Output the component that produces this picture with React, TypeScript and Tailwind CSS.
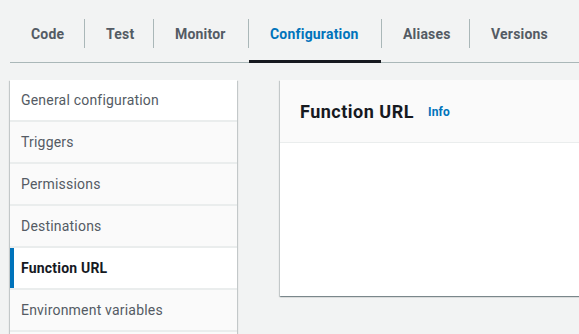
const tabs = [
  { label: "Code", w: "w-[74px]" },
  { label: "Test", w: "w-[69px]" },
  { label: "Monitor", w: "w-[95px]" },
  { label: "Configuration", w: "w-[133px]" },
  { label: "Aliases", w: "w-[88px]" },
  { label: "Versions", w: "w-[98px]" },
]
const sideItems = [
  "General configuration",
  "Triggers",
  "Permissions",
  "Destinations",
  "Function URL",
  "Environment variables",
  "",
]

const cardShadow =
  "shadow-[0_1px_1px_0_rgba(0,28,36,0.3),1px_1px_1px_0_rgba(0,28,36,0.15),-1px_1px_1px_0_rgba(0,28,36,0.15)]"

export default function App() {
  const active = "Configuration"
  const activeSide = "Function URL"

  return (
    <div className="w-[579px] h-[334px] overflow-hidden bg-[#f2f3f3] font-['Roboto',sans-serif] text-[14px]">
      {/* Tabs */}
      <div className="ml-[10px] h-[63px] border-b border-[#aab7b8] flex items-start pt-[19px]">
        {tabs.map((t, i) => (
          <div key={t.label} className={`relative h-[43px] shrink-0 ${t.w}`}>
            <div
              className={`h-[29px] pt-[2px] pl-[21px] flex items-center font-bold tracking-[0.2px] whitespace-nowrap ${
                i > 0 ? "border-l border-[#aab7b8]" : ""
              } ${t.label === active ? "text-[#0073bb]" : "text-[#545b64]"}`}
            >
              {t.label}
            </div>
            {t.label === active && <span className="absolute left-px right-0 -bottom-px h-[3px] bg-[#16191f]" />}
          </div>
        ))}
      </div>

      <div className="flex items-start mt-[17px] ml-[10px]">
        {/* Side nav */}
        <div className={`w-[227px] shrink-0 bg-white ${cardShadow}`}>
          {sideItems.map((s, i) => {
            const on = s === activeSide
            return (
              <div
                key={i}
                className={`relative h-[40px] flex items-center px-[11px] tracking-[0.2px] ${
                  i > 0 ? "border-t-2 border-[#eaeded]" : ""
                } ${on || i === 0 ? "bg-white" : "bg-[#fafafa]"} ${
                  on ? "font-bold text-[#16191f]" : "text-[#545b64]"
                } box-content`}
              >
                {on && <span className="absolute left-0 top-0 bottom-0 w-[4px] bg-[#0073bb]" />}
                {s}
              </div>
            )
          })}
        </div>

        {/* Panel */}
        <div className={`ml-[43px] w-[420px] shrink-0 bg-white ${cardShadow}`}>
          <div className="h-[63px] bg-[#fafafa] border-b border-[#eaeded] flex items-center px-[20px]">
            <span className="text-[18px] font-bold text-[#16191f] tracking-[0.5px]">Function URL</span>
            <span className="ml-[14px] text-[12px] font-bold text-[#0073bb] mt-[2px] tracking-[0.2px]">Info</span>
          </div>
          <div className="h-[153px]" />
        </div>
      </div>
    </div>
  )
}
